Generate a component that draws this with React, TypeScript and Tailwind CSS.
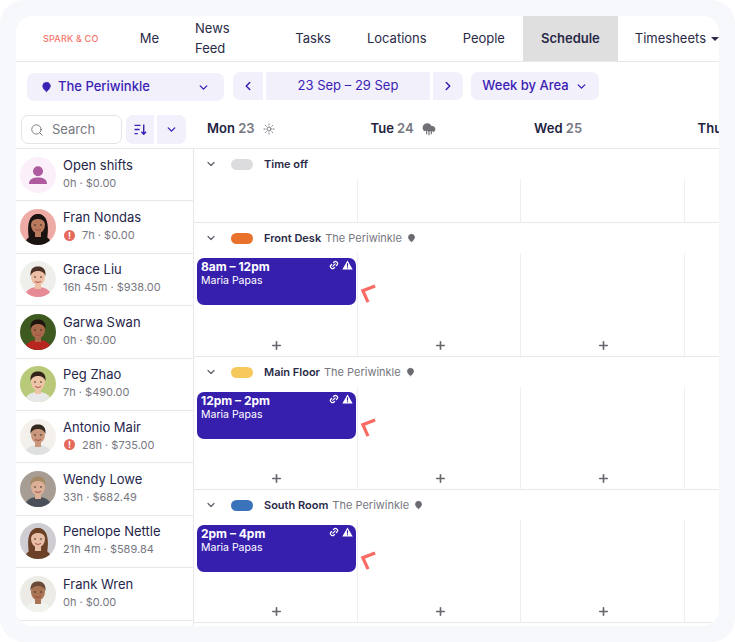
import React from "react";
import { ChevronDown, ChevronLeft, ChevronRight, Search, MapPin, Plus, Link2, TriangleAlert, Sun, CloudRain } from "lucide-react";

const navItems = ["Me", "News Feed", "Tasks", "Locations", "People"];

type P = { bg: string; skin: string; hair: string; shirt: string; long?: boolean; dark?: boolean };
const Avatar = ({ bg, skin, hair, shirt, long }: P) => (
  <svg viewBox="0 0 36 36" className="w-9 h-9 rounded-full shrink-0">
    <rect width="36" height="36" fill={bg} />
    {long && <path d="M9 30 C6 12 11 5 18 5 C25 5 30 12 27 30 Z" fill={hair} />}
    <path d="M4 36 C6 28 12 26 18 26 C24 26 30 28 32 36 Z" fill={shirt} />
    <rect x="15" y="21" width="6" height="7" fill={skin} />
    <ellipse cx="18" cy="16" rx="7" ry="8.5" fill={skin} />
    <path d="M10.5 15 C10 7 14 5.5 18 5.5 C23 5.5 26 8 25.5 15 C24 11 21 10 18 10 C15 10 12 11 10.5 15 Z" fill={hair} />
    <circle cx="15" cy="16" r="0.8" fill="#2b2020" />
    <circle cx="21" cy="16" r="0.8" fill="#2b2020" />
    <path d="M15 20.5 Q18 22.5 21 20.5" stroke="#a04a4a" strokeWidth="0.9" fill="none" />
  </svg>
);

const OpenAvatar = () => (
  <div className="w-9 h-9 rounded-full bg-[#fbeffa] flex items-center justify-center shrink-0">
    <svg viewBox="0 0 20 20" className="w-5 h-5" fill="#ad5a9f">
      <circle cx="10" cy="6.2" r="5" />
      <path d="M1 19 C1 14 5 12.5 10 12.5 C15 12.5 19 14 19 19 Z" />
    </svg>
  </div>
);

const Warn = () => (
  <span className="w-[11px] h-[11px] rounded-full bg-[#e5695c] text-white text-[9px] font-bold leading-[11px] text-center mr-[7px] ml-[1px] shrink-0">!</span>
);

const people: { name: string; sub: string; warn?: boolean; av: P | null }[] = [
  { name: "Open shifts", sub: "0h · $0.00", av: null },
  { name: "Fran Nondas", sub: "7h · $0.00", warn: true, av: { bg: "#eeaaa4", skin: "#b97a5e", hair: "#1a1311", shirt: "#1a1311", long: true } },
  { name: "Grace Liu", sub: "16h 45m · $938.00", av: { bg: "#efefec", skin: "#eebfa5", hair: "#4c3226", shirt: "#e68a96" } },
  { name: "Garwa Swan", sub: "0h · $0.00", av: { bg: "#3f5a20", skin: "#a9694a", hair: "#20140f", shirt: "#b8261f" } },
  { name: "Peg Zhao", sub: "7h · $490.00", av: { bg: "#b9c97a", skin: "#eec4a6", hair: "#33231b", shirt: "#e8e8e8" } },
  { name: "Antonio Mair", sub: "28h · $735.00", warn: true, av: { bg: "#f4f1ec", skin: "#c9977b", hair: "#33291f", shirt: "#dfe0e0" } },
  { name: "Wendy Lowe", sub: "33h · $682.49", av: { bg: "#a79d94", skin: "#dcb096", hair: "#a58a68", shirt: "#4a4f58" } },
  { name: "Penelope Nettle", sub: "21h 4m · $589.84", av: { bg: "#cfccd2", skin: "#e8bda5", hair: "#6b4128", shirt: "#6b4128", long: true } },
  { name: "Frank Wren", sub: "0h · $0.00", av: { bg: "#ecebe6", skin: "#a87454", hair: "#6a4a36", shirt: "#f1f3ee" } },
];

const Row = ({ p }: { p: (typeof people)[number] }) => (
  <div className="h-[52.4px] border-b border-[#e8e8ec] flex items-center pl-1 gap-[7px]">
    {p.av ? <Avatar {...p.av} /> : <OpenAvatar />}
    <div className="min-w-0 -mt-[2px]">
      <div className="text-[13px] leading-[18px] text-[#26264a]">{p.name}</div>
      <div className="text-[11px] leading-[18px] text-[#77777f] flex items-center whitespace-nowrap">
        {p.warn && <Warn />}
        {p.sub}
      </div>
    </div>
  </div>
);

const Flag = () => (
  <svg viewBox="0 0 18 22" className="absolute left-[163px] top-[26px] w-[17px] h-[21px]" fill="none">
    <path d="M16 2 L3 7 L8.5 19" stroke="#fb6a63" strokeWidth="3.4" strokeLinejoin="miter" />
  </svg>
);

const Shift = ({ time }: { time: string }) => (
  <div className="relative w-[159px] h-[47px] rounded-[7px] bg-[#371fae] text-white pl-[4px] pt-[1px] ml-[3px] mt-[5px]">
    <div className="text-[12px] leading-[16px] font-bold">{time}</div>
    <div className="text-[10.5px] leading-[11px]">Maria Papas</div>
    <div className="absolute right-[3px] top-[2px] flex items-center gap-[3px]">
      <Link2 className="w-[10px] h-[10px] -rotate-45" strokeWidth={3} />
      <svg viewBox="0 0 12 11" className="w-[11px] h-[10px]">
        <path d="M6 0.5 L11.7 10.5 H0.3 Z" fill="#fff" />
        <rect x="5.4" y="3.5" width="1.2" height="3.8" fill="#371fae" />
        <rect x="5.4" y="8" width="1.2" height="1.2" fill="#371fae" />
      </svg>
    </div>
    <Flag />
  </div>
);

const AreaHeader = ({ color, title, loc }: { color: string; title: string; loc: boolean }) => (
  <div className="h-[30px] flex items-center pl-[11px]">
    <ChevronDown className="w-[12px] h-[12px] text-[#5f5f68] mr-[14px]" strokeWidth={2.4} />
    <span className="w-[22px] h-[11px] rounded-full mr-[11px]" style={{ background: color }} />
    <span className="text-[11px] font-semibold text-[#2a2a48] mr-[4px]">{title}</span>
    {loc && (
      <>
        <span className="text-[11px] text-[#77777f] mr-[5px]">The Periwinkle</span>
        <MapPin className="w-[9px] h-[10px] text-[#6a6a70] fill-[#6a6a70] stroke-[#6a6a70]" />
      </>
    )}
  </div>
);

const Cell = ({ children, plus }: { children?: React.ReactNode; plus?: boolean }) => (
  <div className="relative border-r border-[#efeff2] w-[163.5px] shrink-0 h-full">
    {children}
    {plus && <Plus className="absolute bottom-[4px] left-[76px] w-[13px] h-[13px] text-[#66666c]" strokeWidth={3} />}
  </div>
);

const Area = ({ color, title, time, h }: { color: string; title: string; time: string; h: string }) => (
  <div className={`${h} border-b border-[#e8e8ec] flex flex-col`}>
    <AreaHeader color={color} title={title} loc />
    <div className="flex flex-1">
      <Cell plus><Shift time={time} /></Cell>
      <Cell plus />
      <Cell plus />
      <Cell />
    </div>
  </div>
);

const Day = ({ d, n, icon }: { d: string; n: string; icon?: React.ReactNode }) => (
  <div className="w-[163.5px] shrink-0 pl-[13px] flex items-center gap-[3px] text-[13px] font-semibold tracking-[0.1px] whitespace-nowrap">
    <span className="text-[#22223f]">{d}</span>
    <span className="text-[#77777f]">{n}</span>
    {icon}
  </div>
);

const pill = "bg-[#f2f0fb] text-[#3b22b4]";

export default function App() {
  return (
    <div className="w-[735px] h-[642px] bg-white overflow-hidden" style={{ fontFamily: "Inter, 'Liberation Sans', sans-serif" }}>
      <div className="w-full h-full bg-[#f7f8fb] rounded-[24px] pl-4 pr-4 pt-4 pb-4">
        <div className="w-[703px] h-[610px] bg-white rounded-[16px] overflow-hidden flex flex-col">
          {/* nav */}
          <div className="h-[46px] border-b border-[#e8e8ec] flex items-stretch shrink-0">
            <div className="w-[111px] pl-[27px] flex items-center text-[9px] font-medium tracking-[0.2px] text-[#f5766b] whitespace-nowrap">SPARK &amp; CO</div>
            {navItems.map((n) => (
              <div key={n} className="px-[18px] flex items-center text-[13px] text-[#2a2a48]">{n}</div>
            ))}
            <div className="px-[18px] flex items-center text-[13px] font-semibold text-[#2a2a48] bg-[#dfdfdf] -ml-[0px]">Schedule</div>
            <div className="pl-[17px] flex items-center text-[13px] text-[#2a2a48] gap-[5px]">
              Timesheets
              <span className="w-0 h-0 border-x-[4px] border-x-transparent border-t-[4px] border-t-[#2a2a48]" />
            </div>
          </div>
          {/* toolbar */}
          <div className="h-[53px] flex items-start pt-[10px] shrink-0 text-[13px]">
            <div className={`${pill} ml-[11px] mt-[1px] w-[197px] h-[28px] rounded-[7px] flex items-center pl-[14px] pr-[14px]`}>
              <MapPin className="w-[11px] h-[12px] mr-[6px] fill-[#3b22b4]" strokeWidth={2} />
              <span className="flex-1 font-medium">The Periwinkle</span>
              <ChevronDown className="w-[13px] h-[13px]" strokeWidth={2.6} />
            </div>
            <div className="flex ml-[9px] gap-[3px]">
              <div className={`${pill} w-[30px] h-[28px] rounded-l-[7px] flex items-center justify-center`}><ChevronLeft className="w-[14px] h-[14px]" strokeWidth={2.6} /></div>
              <div className={`${pill} w-[164px] h-[28px] flex items-center justify-center`}>23 Sep – 29 Sep</div>
              <div className={`${pill} w-[30px] h-[28px] rounded-r-[7px] flex items-center justify-center`}><ChevronRight className="w-[14px] h-[14px]" strokeWidth={2.6} /></div>
            </div>
            <div className={`${pill} ml-[8px] w-[128px] h-[28px] rounded-[7px] flex items-center justify-center gap-[6px] font-medium`}>
              Week by Area
              <ChevronDown className="w-[13px] h-[13px]" strokeWidth={2.6} />
            </div>
          </div>
          {/* search + day headers */}
          <div className="h-[34px] border-b border-[#e8e8ec] flex shrink-0">
            <div className="w-[178px] shrink-0 flex items-start pl-[5px] gap-[4px]">
              <div className="w-[101px] h-[29px] border border-[#e4e4e8] rounded-[7px] flex items-center pl-[8px] gap-[8px] text-[13px] text-[#77777f]">
                <Search className="w-[14px] h-[14px] text-[#77777f]" strokeWidth={1.6} />
                Search
              </div>
              <div className="flex gap-[3px]">
                <div className={`${pill} w-[28px] h-[29px] rounded-l-[7px] flex items-center justify-center`}>
                  <svg viewBox="0 0 14 12" className="w-[13px] h-[11px]" fill="none" stroke="#3b22b4" strokeWidth="1.6">
                    <path d="M0.5 1.5H7M0.5 6H6M0.5 10.5H4" />
                    <path d="M10.5 0.5V11M8 8.5l2.5 2.7L13 8.5" />
                  </svg>
                </div>
                <div className={`${pill} w-[29px] h-[29px] rounded-r-[7px] flex items-center justify-center`}><ChevronDown className="w-[13px] h-[13px]" strokeWidth={2.6} /></div>
              </div>
            </div>
            <div className="flex overflow-hidden items-start pt-[4px]">
              <Day d="Mon" n="23" icon={<Sun className="w-[12px] h-[12px] ml-[5px] text-[#77777f]" strokeWidth={2} />} />
              <Day d="Tue" n="24" icon={<CloudRain className="w-[14px] h-[14px] ml-[5px] text-[#6f6f76] fill-[#6f6f76]" strokeWidth={2} />} />
              <Day d="Wed" n="25" />
              <Day d="Thu" n="26" />
            </div>
          </div>
          {/* body */}
          <div className="flex flex-1 min-h-0">
            <div className="w-[178px] shrink-0 border-r border-[#e8e8ec] flex flex-col">
              {people.map((p) => <Row key={p.name} p={p} />)}
            </div>
            <div className="flex-1 min-w-0 overflow-hidden flex flex-col">
              <div className="h-[74px] border-b border-[#e8e8ec] flex flex-col">
                <AreaHeader color="#dcdcdf" title="Time off" loc={false} />
                <div className="flex flex-1 pt-0">
                  <Cell /><Cell /><Cell /><Cell />
                </div>
              </div>
              <Area color="#e8722c" title="Front Desk" time="8am – 12pm" h="h-[134px]" />
              <Area color="#f7c95c" title="Main Floor" time="12pm – 2pm" h="h-[133px]" />
              <Area color="#3a73ba" title="South Room" time="2pm – 4pm" h="h-[133px]" />
            </div>
          </div>
        </div>
      </div>
    </div>
  );
}
